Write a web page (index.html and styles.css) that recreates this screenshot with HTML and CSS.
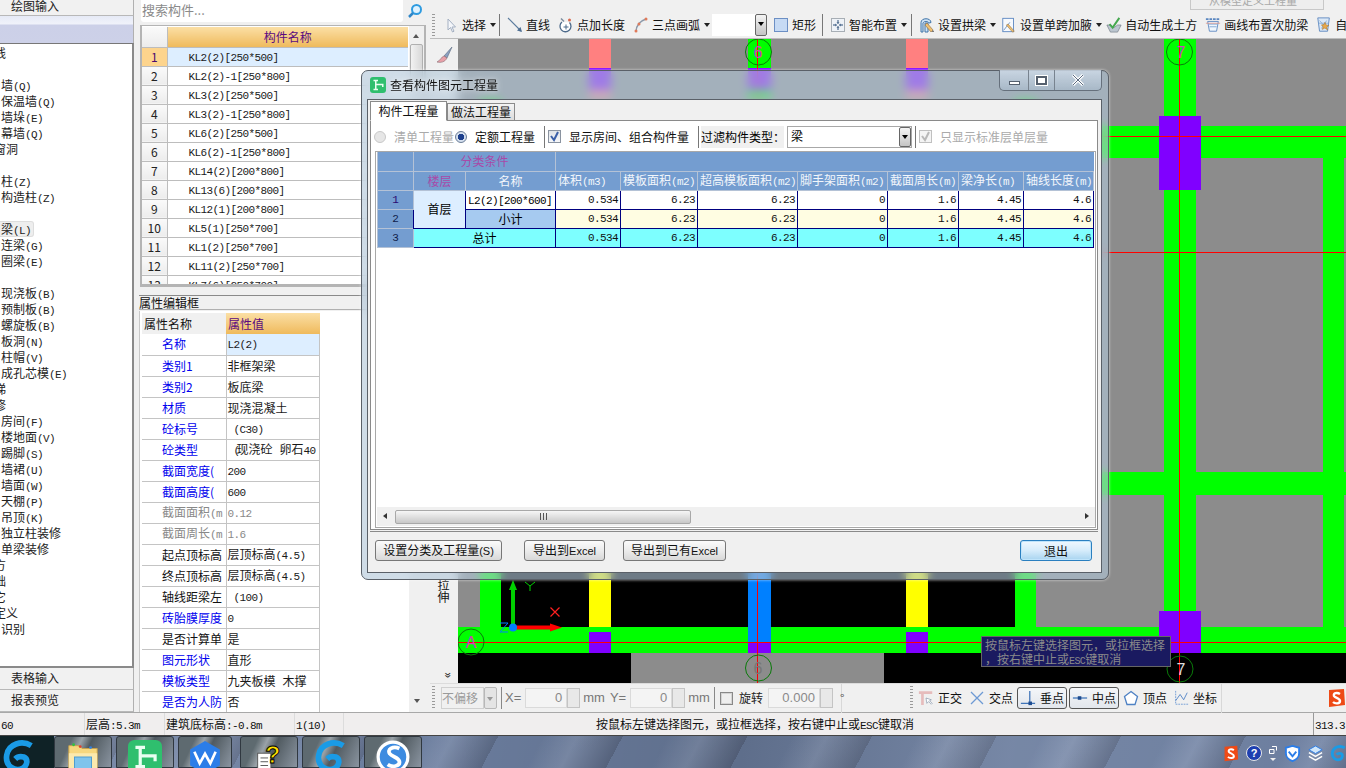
FILE: index.html
```html
<!DOCTYPE html>
<html lang="zh">
<head>
<meta charset="utf-8">
<title>查看构件图元工程量</title>
<link rel="stylesheet" href="styles.css">
</head>
<body>
<svg class="defs" width="0" height="0" aria-hidden="true">
  <symbol id="i-select" viewBox="0 0 16 16"><path d="M5 2v11l2.500-2.500 2 4.500 1.500-.8-2-4.200h3.500z" fill="#f4f6fa" stroke="#a4b0c2"/></symbol>
  <symbol id="i-line" viewBox="0 0 16 16"><path d="M1 1l13 13" stroke="#5c7c9e" stroke-width="1.100"/><path d="M15 15l-5-1.500 3.500-3.500z" fill="#4d6e92"/></symbol>
  <symbol id="i-point" viewBox="0 0 16 16"><path d="M11.500 5.500A5.500 5.500 0 1 1 4 5" fill="#fff" stroke="#4d6a8a" stroke-width="1.300"/><path d="M8 7.500v5M5.500 10h5" stroke="#4d6a8a"/><path d="M3 1.500l3 3" stroke="#7a8a9c" stroke-width="1.400"/><circle cx="11.500" cy="3" r="1.500" fill="#d8684c"/></symbol>
  <symbol id="i-arc" viewBox="0 0 16 16"><path d="M3 15C3 8 7 4 13 2" fill="none" stroke="#8d9aaa" stroke-width="1.500"/><circle cx="3" cy="14" r="1.500" fill="#e07a5a"/><circle cx="6" cy="7" r="1.500" fill="#e07a5a"/><circle cx="13" cy="2" r="1.500" fill="#e07a5a"/></symbol>
  <symbol id="i-rect" viewBox="0 0 16 16"><rect x="1.500" y="1.500" width="13" height="13" fill="#c6daf4" stroke="#6c8fc4"/></symbol>
  <symbol id="i-smart" viewBox="0 0 16 16"><rect x="1.500" y="1.500" width="13" height="13" fill="#eef2f7" stroke="#5f6a76" stroke-dasharray="1 1"/><path d="M8 3v3M8 13v-3M3 8h3M13 8h-3" stroke="#2d4f78"/><path d="M8 7l-1.500-1.500h3zM8 9l-1.500 1.500h3zM7 8L5.500 6.500v3zM9 8l1.500-1.500v3z" fill="#2d4f78"/></symbol>
  <symbol id="i-arch" viewBox="0 0 16 16"><path d="M2 5.500C2 .5 12 .5 12 5.500l-2 .5c-1-2-5-2-6 0v9H2z" fill="#cfe3f6" stroke="#3f74a8"/><path d="M6 6h3v9H6z" fill="#cfe3f6" stroke="#3f74a8"/><path d="M8 6l6 7-2 2-6-7z" fill="#f0c070" stroke="#8a6a40" stroke-width=".6"/><path d="M14 13l1 2-2 0z" fill="#555"/></symbol>
  <symbol id="i-haunch" viewBox="0 0 18 18"><rect x="2" y="1.500" width="12" height="15" fill="#f6f9fd" stroke="#5a86c0"/><path d="M3 15L10 6" stroke="#6a90c0"/><path d="M8 8l7 8-2 1-7-8z" fill="#f0c070" stroke="#8a6a40" stroke-width=".6"/></symbol>
  <symbol id="i-check" viewBox="0 0 18 18"><path d="M1 9h4l4 3 4-3h4l-4 8H5z" fill="#bcc6d0" stroke="#6a7480" stroke-width=".7"/><path d="M4 8l3.500 4L15 1" fill="none" stroke="#45a84f" stroke-width="2.200"/></symbol>
  <symbol id="i-rib" viewBox="0 0 18 18"><path d="M1 2.500h16" stroke="#5a86c0" stroke-width="2" stroke-dasharray="3 1"/><path d="M3 5h12l-2 11H5z" fill="#f0f6fd" stroke="#5a86c0"/><path d="M4 8h10M5 11h8" stroke="#7aa2d2"/><path d="M1 7l16 0" stroke="#e08a7a" stroke-width=".8"/></symbol>
  <symbol id="i-tail" viewBox="0 0 18 18"><path d="M2 1h13l-2 15H4z" fill="#dbe8f6" stroke="#5a86c0"/><path d="M4 4l8 9M12 4l-6 9M3 7h11" stroke="#8aaed8"/><path d="M10 6l1.500 3 3 .5-2.500 2 1 3-3-2-3 1.500 1-3-2-2 3-.5z" fill="#e8a84a" stroke="#a06a20" stroke-width=".5"/></symbol>
  <symbol id="i-brush" viewBox="0 0 20 20"><path d="M18 2l-8 9 3 2z" fill="#8ba0c0" stroke="#5a6a80" stroke-width=".6"/><path d="M10 11c-3 1-3 4-7 6 4 1 8 0 10-4z" fill="#e8a0a8" stroke="#8a6a70" stroke-width=".6"/></symbol>
  <symbol id="i-ortho" viewBox="0 0 18 18"><path d="M1 3h15M5 3v14" stroke="#e6bcbc" stroke-width="3"/><path d="M9 9l1 6 2-2 3 3 1-1-3-3 2-1z" fill="#fff" stroke="#7a8aa0" stroke-width=".7"/></symbol>
  <symbol id="i-cross" viewBox="0 0 16 16"><path d="M2 2l12 12M14 2L2 14" stroke="#6d9ad4" stroke-width="1.300"/></symbol>
  <symbol id="i-perp" viewBox="0 0 18 18"><path d="M1 15h16M11 1v14" stroke="#3f74b8" stroke-width="1.400"/><rect x="9.500" y="13" width="4" height="4" fill="#1e4c90"/></symbol>
  <symbol id="i-mid" viewBox="0 0 18 18"><path d="M1 9h16" stroke="#3f74b8" stroke-width="1.400"/><rect x="6.500" y="7" width="4" height="4" fill="#1e4c90"/></symbol>
  <symbol id="i-apex" viewBox="0 0 16 16"><path d="M8 1.500l6.500 5-2.500 8H4l-2.500-8z" fill="#fff" stroke="#4f82c4" stroke-width="1.300"/></symbol>
  <symbol id="i-coord" viewBox="0 0 18 18"><path d="M3 1v15h14" fill="none" stroke="#6d9ad4" stroke-dasharray="2 1"/><path d="M3 12l5-7 4 6 4-8" fill="none" stroke="#4f82c4"/></symbol>
  <symbol id="i-g" viewBox="0 0 36 36"><path d="M31 6C21 0 7 4 5 16c-2 12 9 18 17 14 5-3 6-10 1-12-4-1-7 0-9 2" fill="none" stroke="#1a9be6" stroke-width="6"/></symbol>
  <symbol id="i-h" viewBox="0 0 32 32"><rect width="32" height="32" rx="6" fill="#2fbf6e"/><path d="M7 7h9M7 25h9M11.500 7v18M11.500 15h14v5" fill="none" stroke="#e9fff2" stroke-width="3"/></symbol>
  <symbol id="i-w" viewBox="0 0 32 32"><path d="M16 1l14 8v15l-14 8-14-8V9z" fill="#2b7de8"/><path d="M6 11l5 11 5-9 5 9 5-11" fill="none" stroke="#fff" stroke-width="2.500"/></symbol>
  <symbol id="i-s" viewBox="0 0 32 32"><circle cx="16" cy="16" r="14" fill="#3d8be0" stroke="#fff" stroke-width="3"/><path d="M22 8c-6-3-12 1-9 5 2 3 8 3 9 7 1 5-7 6-11 3" fill="none" stroke="#fff" stroke-width="3.500"/></symbol>
  <symbol id="i-sogou" viewBox="0 0 20 20"><path d="M3 2l15-1 1 16-16 2z" fill="#ee4a16"/><path d="M14 6c-3-2-7-1-6 2 1 2 6 2 6 5s-5 3-7 1" fill="none" stroke="#fff" stroke-width="2.400"/></symbol>
  <symbol id="i-shield" viewBox="0 0 18 18"><path d="M9 1l7 2v6c0 4-4 7-7 8-3-1-7-4-7-8V3z" fill="#fff" stroke="#2b7de8" stroke-width="2"/><path d="M5 7l4 5 4-5" fill="none" stroke="#2b7de8" stroke-width="2"/></symbol>
  <symbol id="i-cube" viewBox="0 0 18 18"><path d="M9 1l7 4-7 4-7-4z" fill="#cfe6fb" stroke="#2b7de8"/><path d="M2 8l7 4 7-4M2 12l7 4 7-4" fill="none" stroke="#fff" stroke-width="1.500"/></symbol>
</svg>

<div class="app">
  <div class="work">
    <nav class="nav">
      <div class="nav-tab">绘图输入</div>
      <div class="nav-band"></div>
      <ul class="tree">
        <li class="cut">线</li>
        <li></li>
        <li>墙<span class="m">(Q)</span></li>
        <li>保温墙<span class="m">(Q)</span></li>
        <li>墙垛<span class="m">(E)</span></li>
        <li>幕墙<span class="m">(Q)</span></li>
        <li class="cut">窗洞</li>
        <li></li>
        <li>柱<span class="m">(Z)</span></li>
        <li>构造柱<span class="m">(Z)</span></li>
        <li></li>
        <li><span class="sel">梁<span class="m">(L)</span></span></li>
        <li>连梁<span class="m">(G)</span></li>
        <li>圈梁<span class="m">(E)</span></li>
        <li></li>
        <li>现浇板<span class="m">(B)</span></li>
        <li>预制板<span class="m">(B)</span></li>
        <li>螺旋板<span class="m">(B)</span></li>
        <li>板洞<span class="m">(N)</span></li>
        <li>柱帽<span class="m">(V)</span></li>
        <li>成孔芯模<span class="m">(E)</span></li>
        <li class="cut">梯</li>
        <li class="cut">修</li>
        <li>房间<span class="m">(F)</span></li>
        <li>楼地面<span class="m">(V)</span></li>
        <li>踢脚<span class="m">(S)</span></li>
        <li>墙裙<span class="m">(U)</span></li>
        <li>墙面<span class="m">(W)</span></li>
        <li>天棚<span class="m">(P)</span></li>
        <li>吊顶<span class="m">(K)</span></li>
        <li>独立柱装修</li>
        <li>单梁装修</li>
        <li class="cut">方</li>
        <li class="cut">础</li>
        <li class="cut">它</li>
        <li class="cut">定义</li>
        <li>识别</li>
      </ul>
      <div class="nav-tab">表格输入</div>
      <div class="nav-tab">报表预览</div>
    </nav>

    <section class="mid">
      <div class="search">
        <div class="search-box">搜索构件...</div>
        <svg class="search-ico" viewBox="0 0 16 16"><circle cx="9.500" cy="6.500" r="4.500" fill="#dff2ff" stroke="#2e9be0" stroke-width="2"/><path d="M6 10l-4 4" stroke="#2e86c8" stroke-width="2.500"/></svg>
      </div>
      <div class="list">
        <div class="list-clip">
          <table class="ltable">
            <thead><tr><th class="rh"></th><th class="hot">构件名称</th></tr></thead>
            <tbody>
              <tr class="cur"><th class="rh on">1</th><td class="m">KL2(2)[250*500]</td></tr>
              <tr><th class="rh">2</th><td class="m">KL2(2)-1[250*800]</td></tr>
              <tr><th class="rh">3</th><td class="m">KL3(2)[250*500]</td></tr>
              <tr><th class="rh">4</th><td class="m">KL3(2)-1[250*800]</td></tr>
              <tr><th class="rh">5</th><td class="m">KL6(2)[250*500]</td></tr>
              <tr><th class="rh">6</th><td class="m">KL6(2)-1[250*800]</td></tr>
              <tr><th class="rh">7</th><td class="m">KL14(2)[200*800]</td></tr>
              <tr><th class="rh">8</th><td class="m">KL13(6)[200*800]</td></tr>
              <tr><th class="rh">9</th><td class="m">KL12(1)[200*800]</td></tr>
              <tr><th class="rh">10</th><td class="m">KL5(1)[250*700]</td></tr>
              <tr><th class="rh">11</th><td class="m">KL1(2)[250*700]</td></tr>
              <tr><th class="rh">12</th><td class="m">KL11(2)[250*700]</td></tr>
              <tr><th class="rh">13</th><td class="m">KL7(6)[250*700]</td></tr>
            </tbody>
          </table>
        </div>
        <div class="vbar">
          <span class="up"></span>
          <span class="thumb"></span>
        </div>
      </div>
      <div class="split"></div>
      <div class="prop-title">属性编辑框</div>
      <div class="prop">
        <table class="ptable">
          <thead><tr><th class="pn">属性名称</th><th class="hot pv">属性值</th></tr></thead>
          <tbody>
            <tr class="cur"><th class="b">名称</th><td><span class="m">L2(2)</span></td></tr>
            <tr><th class="b">类别1</th><td>非框架梁</td></tr>
            <tr><th class="b">类别2</th><td>板底梁</td></tr>
            <tr><th class="b">材质</th><td>现浇混凝土</td></tr>
            <tr><th class="b">砼标号</th><td><span class="m">&nbsp;(C30)</span></td></tr>
            <tr><th class="b">砼类型</th><td><span class="m ov">&nbsp;(</span>现浇砼<span class="ws">卵石</span><span class="m">40</span></td></tr>
            <tr><th class="b">截面宽度(</th><td><span class="m">200</span></td></tr>
            <tr><th class="b">截面高度(</th><td><span class="m">600</span></td></tr>
            <tr class="dim"><th>截面面积<span class="m">(m</span></th><td><span class="m">0.12</span></td></tr>
            <tr class="dim"><th>截面周长<span class="m">(m</span></th><td><span class="m">1.6</span></td></tr>
            <tr><th>起点顶标高</th><td>层顶标高<span class="m">(4.5)</span></td></tr>
            <tr><th>终点顶标高</th><td>层顶标高<span class="m">(4.5)</span></td></tr>
            <tr><th>轴线距梁左</th><td><span class="m">&nbsp;(100)</span></td></tr>
            <tr><th class="b">砖胎膜厚度</th><td><span class="m">0</span></td></tr>
            <tr><th>是否计算单</th><td>是</td></tr>
            <tr><th class="b">图元形状</th><td>直形</td></tr>
            <tr><th class="b">模板类型</th><td>九夹板模<span class="ws">木撑</span></td></tr>
            <tr><th class="b">是否为人防</th><td>否</td></tr>
          </tbody>
        </table>
        <div class="pbar"><span class="dn"></span></div>
      </div>
    </section>

    <main class="cad">
      <div class="cad-top">
        <div class="strip"><span class="ghost-btn">从模型定义工程量</span></div>
        <div class="toolbar">
          <span class="grip"></span>
          <span class="tool first"><svg class="ic"><use href="#i-select"/></svg>选择<i class="caret"></i></span>
          <span class="vsep"></span>
          <span class="tool"><svg class="ic"><use href="#i-line"/></svg>直线</span>
          <span class="tool"><svg class="ic"><use href="#i-point"/></svg>点加长度</span>
          <span class="tool"><svg class="ic"><use href="#i-arc"/></svg>三点画弧<i class="caret"></i></span>
          <span class="combo"><i class="combo-arrow"></i></span>
          <span class="tool mid6"><svg class="ic"><use href="#i-rect"/></svg>矩形</span>
          <span class="vsep wide"></span>
          <span class="tool tight"><svg class="ic"><use href="#i-smart"/></svg>智能布置<i class="caret"></i></span>
          <span class="vsep s"></span>
          <span class="tool tight"><svg class="ic"><use href="#i-arch"/></svg>设置拱梁<i class="caret"></i></span>
          <span class="tool tight"><svg class="ic"><use href="#i-haunch"/></svg>设置单跨加腋<i class="caret"></i></span>
          <span class="tool snug"><svg class="ic"><use href="#i-check"/></svg>自动生成土方</span>
          <span class="tool"><svg class="ic"><use href="#i-rib"/></svg>画线布置次肋梁</span>
          <span class="tool"><svg class="ic"><use href="#i-tail"/></svg>自动</span>
        </div>
      </div>

      <div class="cad-mid">
        <aside class="side">
          <svg class="brush"><use href="#i-brush"/></svg>
          <div class="side-word">拉<br>伸</div>
          <div class="chev">»</div>
        </aside>
        <svg class="canvas" viewBox="458 39 888 644" aria-label="梁布置图">
          <rect x="458" y="39" width="888" height="644" fill="#8c8c8c"/>
          <rect x="501" y="540" width="514" height="87" fill="#000"/>
          <rect x="458" y="653" width="173" height="30" fill="#000"/>
          <rect x="884" y="653" width="462" height="30" fill="#000"/>
          <g fill="#00ff00">
            <rect x="480" y="100" width="21" height="527"/>
            <rect x="748" y="39" width="23" height="60"/>
            <rect x="1015" y="100" width="21" height="527"/>
            <rect x="1164" y="39" width="32" height="600"/>
            <rect x="1323" y="126" width="21" height="510"/>
            <rect x="458" y="126" width="888" height="32"/>
            <rect x="458" y="472" width="888" height="23"/>
            <rect x="458" y="627" width="888" height="26"/>
          </g>
          <rect x="589" y="39" width="22" height="60" fill="#ff8080"/>
          <rect x="906" y="39" width="22" height="60" fill="#ff8080"/>
          <rect x="589" y="530" width="22" height="97" fill="#ffff00"/>
          <rect x="906" y="530" width="22" height="97" fill="#ffff00"/>
          <rect x="748" y="530" width="23" height="113" fill="#0080ff"/>
          <g fill="#8000ff">
            <rect x="589" y="68" width="22" height="22"/>
            <rect x="748" y="68" width="23" height="22"/>
            <rect x="906" y="68" width="22" height="22"/>
            <rect x="1159" y="116" width="42" height="74"/>
            <rect x="589" y="632" width="22" height="21"/>
            <rect x="748" y="643" width="23" height="10"/>
            <rect x="906" y="632" width="22" height="21"/>
            <rect x="1159" y="611" width="42" height="42"/>
          </g>
          <g stroke="#ff0000" stroke-width="1" shape-rendering="crispEdges">
            <path d="M458 136.500H1346M458 252.500H1346M458 642.500H1346"/>
            <path d="M757.500 39V683M1179.500 39V683"/>
          </g>
          <g fill="none" stroke="#0a7a0a">
            <circle cx="758.500" cy="52" r="13"/>
            <circle cx="1179.500" cy="52" r="13"/>
            <circle cx="471" cy="642" r="13"/>
            <circle cx="758.500" cy="668" r="13"/>
            <circle cx="1180" cy="669" r="13"/>
          </g>
          <g class="axis-label">
            <text x="758" y="58" text-anchor="middle">6</text>
            <text x="1181" y="58" text-anchor="middle">7</text>
            <text x="471" y="648" text-anchor="middle">A</text>
            <text x="758" y="674" text-anchor="middle" class="fade">6</text>
            <text x="1181" y="675" text-anchor="middle" class="white">7</text>
          </g>
          <path d="M513 627V587" stroke="#00d000" stroke-width="4"/>
          <path d="M513 580l-4 10h8z" fill="#00d000"/>
          <path d="M513 627.500H552" stroke="#ff0000" stroke-width="4"/>
          <path d="M562 627.500l-12-4v8z" fill="#ff0000"/>
          <circle cx="513" cy="627.500" r="4" fill="#0080ff"/>
          <path d="M525 582l5 4 5-4M530 586v5" fill="none" stroke="#00d000"/>
          <path d="M550.500 607.500l9 9M559.500 607.500l-9 9" fill="none" stroke="#ff2020" stroke-width="1.200"/>
          <path d="M500 623h8l-8 9h8" fill="none" stroke="#0080ff"/>
        </svg>
      </div>

      <div class="snapbar">
        <div class="snap-left">
          <span class="grip tall"></span>
          <span class="off">不偏移</span>
          <span class="off-arrow"></span>
          <span class="vsep h"></span>
          <span class="lab dim">X=</span>
          <span class="num w42"><b>0</b></span><span class="spin"></span>
          <span class="lab dim u">mm</span>
          <span class="lab dim">Y=</span>
          <span class="num w42"><b>0</b></span><span class="spin"></span>
          <span class="lab dim u">mm</span>
          <span class="vsep h"></span>
          <span class="chk"></span>
          <span class="lab rot">旋转</span>
          <span class="num w52"><b>0.000</b></span><span class="spin"></span>
          <span class="lab deg">°</span>
        </div>
        <div class="snap-right">
          <span class="grip tall"></span>
          <span class="tool s"><svg class="ic"><use href="#i-ortho"/></svg>正交</span>
          <span class="tool s"><svg class="ic"><use href="#i-cross"/></svg>交点</span>
          <span class="tool s on"><svg class="ic"><use href="#i-perp"/></svg>垂点</span>
          <span class="tool s on"><svg class="ic"><use href="#i-mid"/></svg>中点</span>
          <span class="tool s"><svg class="ic"><use href="#i-apex"/></svg>顶点</span>
          <span class="tool s"><svg class="ic"><use href="#i-coord"/></svg>坐标</span>
        </div>
        <svg class="sogou"><use href="#i-sogou"/></svg>
      </div>
    </main>
  </div>

  <footer class="status">
    <span class="c w85"><span class="m">60</span></span>
    <span class="c w79">层高<span class="m">:5.3m</span></span>
    <span class="c w131">建筑底标高<span class="m">:-0.8m</span></span>
    <span class="c w49"><span class="m">1(10)</span></span>
    <span class="c msg">按鼠标左键选择图元，或拉框选择，按右键中止或<span class="m">ESC</span>键取消</span>
    <span class="c coord"><span class="m">313.3</span></span>
  </footer>

  <div class="taskbar">
    <span class="start"><svg class="tb-ic"><use href="#i-g"/></svg></span>
    <span class="tb w58"><svg class="tb-ic" viewBox="0 0 36 36"><path d="M3 6h11l3 3h16v27H3z" fill="#f6d77e" stroke="#c9a24a"/><path d="M3 14h30v22H3z" fill="#fbe9ad"/><rect x="9" y="18" width="18" height="18" fill="#7fc4ec" stroke="#4a9ad0"/><circle cx="8" cy="5" r="1.500" fill="#30c040"/><circle cx="15" cy="7" r="1.500" fill="#e04030"/><circle cx="26" cy="8" r="1.500" fill="#3080e0"/></svg></span>
    <span class="tb w58"><svg class="tb-ic"><use href="#i-h"/></svg></span>
    <span class="tb w53"><svg class="tb-ic"><use href="#i-w"/></svg></span>
    <span class="tb w58 gap8"><svg class="tb-ic" viewBox="0 0 36 36"><rect x="6" y="14" width="14" height="22" fill="#fff" stroke="#555"/><path d="M9 19h8M9 23h8M9 27h8M9 31h8" stroke="#555"/><text x="14" y="24" class="qm">?</text></svg></span>
    <span class="tb w58"><svg class="tb-ic"><use href="#i-g"/></svg></span>
    <span class="tb w58"><svg class="tb-ic"><use href="#i-s"/></svg></span>
    <span class="tray">
      <svg class="tr-ic"><use href="#i-sogou"/></svg>
      <span class="help">?</span>
      <span class="flag"><svg viewBox="0 0 8 8" width="8" height="8"><path d="M.5 3.500h4.500v4H.5zM3 .5h4.500v4" fill="none" stroke="#fff"/></svg><i></i></span>
      <svg class="tr-ic"><use href="#i-shield"/></svg>
      <svg class="tr-ic"><use href="#i-cube"/></svg>
      <svg class="tr-ic"><use href="#i-g"/></svg>
    </span>
  </div>

  <!-- floating tooltip over the drawing -->
  <div class="tip">按鼠标左键选择图元，或拉框选择<br>，按右键中止或<span class="m">ESC</span>键取消</div>

  <!-- floating dialog window -->
  <div class="dlg">
    <header class="dlg-title">
      <svg class="dlg-ic"><use href="#i-h"/></svg>
      <span class="dlg-name">查看构件图元工程量</span>
      <div class="winbtns">
        <span class="wb min"><i></i></span>
        <span class="wb max"><i></i></span>
        <span class="wb close">
          <svg width="14" height="12" viewBox="0 0 14 12"><path d="M2 1l10 10M12 1L2 11" stroke="#fff" stroke-width="3"/><path d="M2 1l10 10M12 1L2 11" stroke="#5a6a80" stroke-width="1"/></svg>
        </span>
      </div>
    </header>
    <div class="dlg-body">
      <div class="tabs">
        <span class="tab act">构件工程量</span>
        <span class="tab">做法工程量</span>
      </div>
      <div class="tabpanel">
        <div class="opts">
          <span class="radio off-r"></span>
          <span class="o-lab gray w60">清单工程量</span>
          <span class="radio on-r"></span>
          <span class="o-lab w60">定额工程量</span>
          <span class="osep"></span>
          <span class="ck"><svg width="11" height="11" viewBox="0 0 11 11"><path d="M2 5l3 4 4-8" fill="none" stroke="#3a5fa8" stroke-width="2"/></svg></span>
          <span class="o-lab">显示房间、组合构件量</span>
          <span class="osep"></span>
          <span class="filter">过滤构件类型：</span>
          <span class="fcombo">梁<i class="combo-arrow"></i></span>
          <span class="osep"></span>
          <span class="ck dis"><svg width="11" height="11" viewBox="0 0 11 11"><path d="M2 5l3 4 4-8" fill="none" stroke="#b8b8b8" stroke-width="2"/></svg></span>
          <span class="o-lab gray">只显示标准层单层量</span>
        </div>
        <div class="gridbox">
          <div class="gridarea">
            <table class="qty">
              <colgroup>
                <col class="c36"><col class="c52"><col class="c90"><col class="c65"><col class="c77"><col class="c100"><col class="c90"><col class="c71"><col class="c65"><col class="c70">
              </colgroup>
              <thead>
                <tr>
                  <th></th>
                  <th colspan="2" class="pk">分类条件</th>
                  <th colspan="7" class="noline"></th>
                </tr>
                <tr>
                  <th></th>
                  <th class="pk">楼层</th>
                  <th>名称</th>
                  <th class="lf">体积<span class="m">(m3)</span></th>
                  <th class="lf">模板面积<span class="m">(m2)</span></th>
                  <th class="lf">超高模板面积<span class="m">(m2)</span></th>
                  <th class="lf">脚手架面积<span class="m">(m2)</span></th>
                  <th class="lf">截面周长<span class="m">(m)</span></th>
                  <th class="lf">梁净长<span class="m">(m)</span></th>
                  <th class="lf">轴线长度<span class="m">(m)</span></th>
                </tr>
              </thead>
              <tbody>
                <tr>
                  <th class="sn pu">1</th>
                  <td rowspan="2" class="floor">首层</td>
                  <td class="nm"><span class="m">L2(2)[200*600]</span></td>
                  <td class="v">0.534</td><td class="v">6.23</td><td class="v">6.23</td><td class="v">0</td><td class="v">1.6</td><td class="v">4.45</td><td class="v">4.6</td>
                </tr>
                <tr class="sub">
                  <th class="sn">2</th>
                  <td class="subn">小计</td>
                  <td class="v">0.534</td><td class="v">6.23</td><td class="v">6.23</td><td class="v">0</td><td class="v">1.6</td><td class="v">4.45</td><td class="v">4.6</td>
                </tr>
                <tr class="tot">
                  <th class="sn">3</th>
                  <td colspan="2" class="totn">总计</td>
                  <td class="v">0.534</td><td class="v">6.23</td><td class="v">6.23</td><td class="v">0</td><td class="v">1.6</td><td class="v">4.45</td><td class="v">4.6</td>
                </tr>
              </tbody>
            </table>
          </div>
          <div class="hbar">
            <span class="harr l"></span>
            <span class="hthumb"><i></i></span>
            <span class="harr r"></span>
          </div>
        </div>
      </div>
      <div class="dlg-foot">
        <button class="btn w127">设置分类及工程量<span class="ln">(S)</span></button>
        <button class="btn w81 ml22">导出到<span class="ln">Excel</span></button>
        <button class="btn w103 ml18">导出到已有<span class="ln">Excel</span></button>
        <button class="btn w72 primary">退出</button>
      </div>
    </div>
  </div>
</div>
</body>
</html>
```

FILE: styles.css
```css
* { box-sizing: border-box; }
html, body { margin: 0; padding: 0; height: 768px; overflow: hidden; }
body { font: 12px/16px "Noto Sans CJK SC", "Noto Sans", sans-serif; color: #000; background: #f0f0f0; }
.defs { position: absolute; }
ul { list-style: none; margin: 0; padding: 0; }
i { font-style: normal; }

.m { font-family: "Liberation Mono", "Noto Sans CJK SC", monospace; font-size: 11px; letter-spacing: -0.6px; }

.app { position: relative; width: 1346px; height: 768px; display: flex; flex-direction: column; }
.work { display: flex; height: 713px; flex: none; border-bottom: 1px solid #a8a8a8; }

/* left navigator */
.nav { width: 134px; flex: none; display: flex; flex-direction: column; }
.nav-tab { height: 22px; flex: none; padding: 2px 0 0 11px; background: #f1f1f1; border-right: 1px solid #b0b0b0; border-bottom: 1px solid #b8b8b8; font-size: 12px; color: #222; }
.nav > .nav-tab:first-child { height: 16px; margin-top: 0; padding-top: 0; line-height: 11px; }
.nav-band { height: 27px; flex: none; background: linear-gradient(#e6eaf6 0, #f0f2fa 8px, #ccd0e8 9px, #cdd1e8 100%); border-right: 1px solid #b0b0b0; }
.tree { flex: 1; min-height: 0; overflow: hidden; background: #fff; border-top: 1px solid #777; border-right: 2px solid #8a8a8a; border-bottom: 2px solid #8a8a8a; padding-top: 1px; }
.tree li { height: 16px; line-height: 16px; padding-left: 1px; white-space: nowrap; color: #222; }
.tree li.cut { margin-left: -7px; }
.sel { display: inline-block; height: 16px; padding-right: 2px; margin-left: -1px; padding-left: 1px; background: #eee; border: 1px solid #ddd; border-left: 0; border-radius: 0 3px 3px 0; line-height: 14px; }

/* middle panel */
.mid { width: 296px; flex: none; padding-left: 5px; background: #f0f0f0; display: flex; flex-direction: column; }
.search { height: 25px; flex: none; display: flex; padding-left: 2px; }
.search-box { width: 262px; height: 22px; background: #fff; border-radius: 0 0 3px 3px; color: #8a8a8a; font-size: 13px; line-height: 19px; padding-left: 1px; }
.search-ico { width: 16px; height: 16px; margin: 3px 0 0 4px; }
.list { width: 286px; height: 262px; flex: none; margin-left: 1px; border: 2px solid #b4b4b4; border-bottom-width: 3px; border-top-width: 1px; display: flex; background: #f0f0f0; overflow: hidden; }
.list-clip { width: 267px; flex: none; overflow: hidden; padding: 1px 0 0 0; background: #fff; }
.ltable { width: 266px; table-layout: fixed; border-collapse: collapse; }
.ltable th, .ltable td { height: 19px; padding: 0; border: 0; border-bottom: 1px solid #bdbdbd; font-weight: normal; white-space: nowrap; }
.ltable thead th { height: 20px; }
.ltable .rh { width: 25px; border-right: 1px solid #bdbdbd; background: linear-gradient(#fafafa, #ececec); text-align: center; color: #222; }
.ltable td { padding-left: 21px; padding-top: 2px; color: #1a1a1a; }
.hot { background: linear-gradient(#fbdfa5, #efba5c); color: #5a0a80; font-weight: normal; }
.cur td { background: #ddeeff; }
.ltable .rh.on { background: #fdd48d; color: #4a0a70; }
.vbar { width: 15px; flex: none; display: flex; flex-direction: column; padding-top: 1px; }
.up { height: 17px; position: relative; }
.up::after { content: ""; position: absolute; left: 4px; top: 7px; border: 3px solid transparent; border-bottom: 4px solid #555; border-top: 0; }
.thumb { height: 45px; margin: 0 1px; background: linear-gradient(90deg, #f2f2f2, #d8d8d8); border: 1px solid #b0b0b0; border-radius: 2px; }
.split { height: 8px; flex: none; }
.prop-title { height: 15px; flex: none; width: 291px; border-top: 1px solid #8a8a8a; border-bottom: 1px solid #b0b0b0; line-height: 13px; color: #111; }
.prop { width: 287px; height: 401px; flex: none; margin-top: 1px; background: #fff; padding: 2px 0 0 2px; display: flex; justify-content: space-between; border-left: 1px solid #c8c8c8; overflow: hidden; }
.ptable { width: 178px; table-layout: fixed; border-collapse: collapse; }
.ptable th, .ptable td { height: 21px; padding: 0; font-weight: normal; text-align: left; white-space: nowrap; overflow: hidden; border-bottom: 1px solid #c4c4c4; }
.ptable thead th { height: 21px; border-bottom: 0; }
.pn { width: 84px; padding-left: 2px !important; background: #f0f0f0; color: #111; }
.pv { padding-left: 2px !important; }
.ptable tbody th { padding-left: 20px; color: #111; border-right: 1px solid #c4c4c4; }
.ptable tbody th.b { color: #0000ee; }
.ptable td { padding-left: 1px; color: #1a1a1a; border-right: 1px solid #c4c4c4; }
.ptable .dim th, .ptable .dim td { color: #888; }
.ov { margin-right: -3px; }
.ws { margin-left: 7px; }
.pbar { width: 17px; flex: none; background: #f0f0f0; position: relative; height: 399px; }
.dn { position: absolute; left: 5px; bottom: 9px; border: 3px solid transparent; border-top: 4px solid #555; border-bottom: 0; }

/* main drawing column */
.cad { width: 916px; flex: none; display: flex; flex-direction: column; }
.cad-top { height: 39px; flex: none; border-bottom: 1px solid #bcbcbc; background: #f0f0f0; }
.strip { height: 12px; display: flex; justify-content: flex-end; padding-right: 22px; overflow: hidden; }
.ghost-btn { width: 134px; height: 10px; background: #eee; border: 1px solid #c8c8c8; border-top: 0; color: #aaa; line-height: 1px; padding-left: 18px; font-size: 11px; white-space: nowrap; overflow: hidden; }
.toolbar { height: 26px; display: flex; align-items: center; white-space: nowrap; overflow: hidden; }
.grip { width: 3px; height: 22px; margin: 0 8px 0 2px; flex: none; background: repeating-linear-gradient(#9a9a9a 0 1px, transparent 1px 3px); }
.grip.tall { height: 24px; }
.tool { display: inline-flex; align-items: center; gap: 3px; margin-left: 8px; flex: none; color: #111; }
.tool.first { margin-left: 0; }
.tool.tight { margin-left: 5px; }
.tool.snug { margin-left: 4px; }
.tool.mid6 { margin-left: 6px; }
.ic { width: 16px; height: 16px; flex: none; }
.caret { width: 0; height: 0; margin-left: 1px; border: 3.5px solid transparent; border-top: 4px solid #222; border-bottom: 0; }
.vsep { width: 1px; height: 22px; margin: 0 0 0 3px; background: #777; flex: none; }
.vsep.wide { margin-left: 6px; }
.vsep + .tool { margin-left: 7px; }
.vsep.s { margin-left: 4px; }
.combo { width: 55px; height: 22px; margin-left: 2px; background: #fff; position: relative; flex: none; }
.combo-arrow { position: absolute; right: 0; top: 0; bottom: 0; width: 12px; background: linear-gradient(#f4f4f4, #c4c4c4); border: 1px solid #666; border-radius: 2px; }
.combo-arrow::after { content: ""; position: absolute; left: 2px; top: 7px; border: 3px solid transparent; border-top: 4px solid #000; border-bottom: 0; }

.cad-mid { flex: 1; display: flex; min-height: 0; }
.side { width: 28px; flex: none; background: #f0f0f0; display: flex; flex-direction: column; align-items: center; padding: 6px 0 0; }
.brush { width: 20px; height: 20px; flex: none; }
.side-word { margin-top: auto; line-height: 12px; color: #111; margin-right: 1px; }
.chev { height: 14px; margin: 65px 0 1px 9px; font-size: 13px; line-height: 11px; transform: rotate(90deg); color: #111; }
.canvas { width: 888px; height: 644px; flex: none; display: block; }
.axis-label text { font: 16px "Liberation Sans", sans-serif; fill: #d040c0; }
.axis-label .white { fill: #dddddd; }
.axis-label .fade { fill: #777; }

.snapbar { height: 29px; flex: none; display: flex; align-items: center; background: #f0f0f0; border-top: 1px solid #dcdcdc; position: relative; }
.snap-left { width: 412px; height: 29px; flex: none; display: flex; align-items: center; border-right: 1px solid #d8d8d8; color: #111; }
.snap-left .grip { margin-right: 6px; }
.off { width: 43px; height: 22px; flex: none; color: #9a9a9a; border: 1px solid #d0d0d0; font-size: 12px; line-height: 20px; white-space: nowrap; text-align: left; }
.off-arrow { width: 13px; height: 22px; flex: none; background: #e4e4e4; border: 1px solid #b8b8b8; position: relative; border-radius: 2px; }
.off-arrow::after { content: ""; position: absolute; left: 2px; top: 9px; border: 3px solid transparent; border-top: 4px solid #999; border-bottom: 0; }
.snap-left .vsep { margin: 0 3px 0 4px; height: 22px; background: #888; }
.lab { flex: none; }
.lab.dim { color: #777; font-family: "Liberation Sans", sans-serif; font-size: 13px; }
.lab.u { margin: 0 5px 0 3px; }
.snap-left .u + .vsep { margin-left: -1px; }
.rot { margin: 0 1px 0 6px; color: #222; }
.deg { margin-left: 7px; color: #555; }
.num { height: 20px; text-align: right; background: #f4f4f4; border: 1px solid #dadada; font-family: "Liberation Sans", sans-serif; font-size: 13px; line-height: 18px; padding-right: 4px; color: #8a8a8a; margin-left: 4px; flex: none; }
.num b { font-weight: normal; }
.w42 { width: 42px; }
.w52 { width: 52px; }
.spin { width: 13px; height: 20px; flex: none; background: linear-gradient(#e8e8e8 50%, #aaa 50%, #aaa 52%, #e8e8e8 52%); border: 1px solid #c4c4c4; }
.chk { width: 13px; height: 13px; margin-left: 2px; background: #eee; border: 1px solid #888; box-shadow: inset 0 0 0 1px #d4d4d4; flex: none; }
.snap-right { width: 312px; height: 29px; flex: none; margin-left: 68px; display: flex; align-items: center; border-right: 1px solid #d8d8d8; white-space: nowrap; }
.snap-right .grip { margin: 0 1px 0 0; }
.snap-right .tool { margin-left: 7px; gap: 4px; }
.snap-right .grip + .tool { margin-left: 4px; }
.snap-right .tool.on { height: 22px; margin-left: 4px; padding: 0 2px; background: linear-gradient(#f4f6f9, #e2e6ec); border: 1px solid #555; border-radius: 3px; }
.snap-right .tool.on + .tool.on { margin-left: 2px; }
.snap-right .tool.on + .tool:not(.on) { margin-left: 4px; }
.snap-right .tool:last-child { margin-left: 6px; }
.sogou { width: 20px; height: 22px; position: absolute; right: 0; top: 3px; }

/* status bar */
.status { height: 23px; flex: none; display: flex; background: #f0eeee; border-bottom: 1px solid #444; }
.status .c { padding-left: 1px; line-height: 22px; border-right: 1px solid #dcdcdc; flex: none; white-space: nowrap; color: #111; }
.status .m { font-size: 11px; }
.w85 { width: 85px; }
.w79 { width: 80px; }
.w131 { width: 130px; }
.w49 { width: 49px; }
.status .msg { width: 970px; padding-left: 252px; border-right: 1px solid #999; }
.status .coord { flex: 1; border: 0; padding-left: 1px; }

/* taskbar */
.taskbar { height: 32px; flex: none; display: flex; overflow: hidden; background: linear-gradient(100deg, rgba(255,255,255,.1) 0 10%, transparent 30%, rgba(0,0,0,.12) 55%, rgba(255,255,255,.08) 75%, transparent 100%), repeating-linear-gradient(118deg, #6b7d9e 0 40px, #7e8eac 70px, #5c6a86 110px); }
.start { width: 54px; height: 32px; flex: none; background: #0f2226; display: flex; justify-content: flex-start; padding: 3px 0 0 2px; }
.tb { height: 32px; flex: none; margin-left: 1px; display: flex; justify-content: center; padding-top: 2px; background: linear-gradient(115deg, #5e6a70 0 25%, #9aa2a8 40%, #505a60 55%, #8a94a0 100%); border: 1px solid #303840; border-radius: 3px 3px 0 0; margin-right: 3px; }
.start + .tb { margin-left: 0; }
.w58 { width: 58px; }
.w53 { width: 54px; margin-right: 8px; }
.gap8 { margin-left: 0; }
.tb-ic { width: 34px; height: 36px; flex: none; }
.qm { font: bold 26px "Liberation Sans", sans-serif; fill: #ffe000; stroke: #000; stroke-width: 1; }
.tray { margin-left: auto; display: flex; align-items: center; gap: 6px; padding: 2px 0 0; width: 124px; flex: none; overflow: hidden; }
.tr-ic { width: 17px; height: 17px; flex: none; }
.help { width: 16px; height: 16px; border-radius: 50%; background: #1e3fb0; border: 1px solid #e8e8e8; color: #fff; text-align: center; font: bold 11px/14px "Liberation Sans", sans-serif; flex: none; margin-left: 1px; }
.flag { width: 10px; flex: none; display: flex; flex-direction: column; align-items: center; gap: 4px; }
.flag i { border: 3px solid transparent; border-top: 3px solid #eee; border-bottom: 0; }

/* tooltip */
.tip { position: absolute; left: 981px; top: 636px; width: 190px; height: 31px; padding: 1px 3px; background: #1a1a60; border: 1px solid #666; color: #8a8a8a; line-height: 14px; white-space: nowrap; }
.tip .m { font-size: 10px; }

/* dialog */
.dlg { position: absolute; left: 361px; top: 70px; width: 748px; height: 510px; padding: 0 6px 6px 5px; border: 1px solid #5a6068; border-radius: 7px; background: rgba(178,198,216,.62); -webkit-backdrop-filter: blur(5px); backdrop-filter: blur(5px); box-shadow: 0 0 3px rgba(255,255,255,.7); display: flex; flex-direction: column; }
.dlg-title { height: 28px; flex: none; display: flex; align-items: center; position: relative; padding-left: 3px; }
.dlg-ic { width: 16px; height: 16px; }
.dlg-name { margin-left: 4px; color: #111; font-size: 12px; text-shadow: 0 0 6px #fff; }
.winbtns { position: absolute; right: 0; top: -1px; display: flex; height: 21px; border: 1px solid #66707c; border-top: 0; border-radius: 0 0 5px 5px; background: linear-gradient(rgba(210,222,235,.8), rgba(170,188,205,.7)); }
.wb { height: 20px; display: flex; align-items: center; justify-content: center; border-right: 1px solid #78838f; }
.wb.min { width: 29px; }
.wb.max { width: 26px; }
.wb.close { width: 46px; border: 0; }
.wb.min i { width: 11px; height: 4px; margin-top: 6px; background: #fff; border: 1px solid #55606e; }
.wb.max i { width: 11px; height: 9px; background: #fff; border: 2px solid #55606e; box-shadow: 0 0 0 1px #fff; }
.dlg-body { flex: 1; background: #f0f0f0; border: 1px solid #5a6068; padding: 1px 3px 0 2px; display: flex; flex-direction: column; min-height: 0; }
.tabs { height: 20px; flex: none; display: flex; align-items: flex-end; margin-bottom: -1px; position: relative; z-index: 1; }
.tab { width: 68px; height: 18px; background: linear-gradient(#f4f4f4, #dcdcdc); border: 1px solid #8a8a8a; border-bottom: 1px solid #8a8a8a; text-align: center; line-height: 16px; color: #111; }
.tab.act { width: 77px; height: 20px; background: #fff; border-bottom: 1px solid #fff; line-height: 18px; }
.tabpanel { height: 410px; width: 728px; flex: none; background: #fff; border: 1px solid #8a8a8a; padding: 0 1px 0 4px; display: flex; flex-direction: column; }
.opts { height: 30px; flex: none; display: flex; align-items: center; padding-top: 1px; white-space: nowrap; }
.radio { width: 12px; height: 12px; border-radius: 50%; flex: none; }
.off-r { background: #e6e6e6; border: 1px solid #c8c8c8; }
.on-r { background: radial-gradient(circle, #1c3f8c 0 3px, #d4dfee 3.500px); border: 1px solid #6a7c96; margin-left: 1px; }
.o-lab { margin-left: 8px; color: #111; }
.o-lab.gray { color: #aaa; }
.w60 { width: 60px; margin-right: 0; }
.radio.off-r { margin-left: -1px; }
.ck { width: 13px; height: 13px; display: flex; align-items: center; justify-content: center; background: linear-gradient(#dfe3e8, #f6f7f9); border: 1px solid #8a93a0; margin-left: 3px; flex: none; }
.ck.dis { background: #f4f4f4; border-color: #c0c0c0; }
.osep { width: 1px; height: 22px; margin-left: 9px; background: #777; flex: none; }
.opts .osep + .filter { margin-left: 2px; }
.filter { width: 83px; height: 22px; line-height: 22px; background: #f0f0f0; flex: none; overflow: hidden; }
.fcombo { width: 125px; height: 22px; margin-left: 3px; position: relative; background: #fff; border: 1px solid #a8a8a8; line-height: 18px; padding-left: 3px; flex: none; }
.fcombo + .osep { margin-left: 3px; }
.gridbox { height: 377px; width: 721px; flex: none; border: 1px solid #a8a8a8; display: flex; flex-direction: column; padding: 0 0 0 1px; }
.gridarea { flex: 1; min-height: 0; }
.qty { width: 716px; table-layout: fixed; border-collapse: collapse; }
.c36 { width: 36px; } .c52 { width: 52px; } .c90 { width: 90px; } .c65 { width: 65px; } .c77 { width: 77px; } .c100 { width: 100px; } .c71 { width: 71px; } .c70 { width: 70px; }
.qty th, .qty td { height: 19px; padding: 0; font-weight: normal; white-space: nowrap; overflow: hidden; }
.qty thead th { background: #749dd0; color: #f2f6fb; border: 1px solid #b4c2d6; border-top: 0; text-align: center; }
.qty thead th.lf { text-align: left; padding-left: 2px; }
.qty thead th.pk { color: #a84aa8; }
.qty thead th.noline { border-right: 0; }
.qty .sn { background: #749dd0; color: #10204a; border: 1px solid #b4c2d6; border-top: 0; text-align: center; font: 11px/18px "Liberation Mono", monospace; }
.qty .sn.pu { color: #2a0a70; }
.qty td { border: 1px solid #000080; background: #fff; }
.qty .v { text-align: right; padding-right: 2px; font: 11px/18px "Liberation Mono", monospace; letter-spacing: -0.6px; color: #111; }
.qty .floor { background: #ddeeff; text-align: center; }
.qty .nm { padding-left: 2px; }
.sub .v { background: #fffde2; }
.qty .subn { background: #a6caf0; text-align: center; }
.tot td, .tot .v { background: #7dffff; }
.qty .totn { text-align: center; }
.hbar { height: 19px; flex: none; margin: 0 0 1px 0; background: #f0f0f0; display: flex; align-items: center; padding: 0 2px 0 0; }
.harr { width: 16px; height: 17px; position: relative; flex: none; }
.harr.l::after { content: ""; position: absolute; left: 6px; top: 5px; border: 3px solid transparent; border-right: 4px solid #333; border-left: 0; }
.harr.r { margin-left: auto; }
.harr.r::after { content: ""; position: absolute; right: 4px; top: 5px; border: 3px solid transparent; border-left: 4px solid #333; border-right: 0; }
.hthumb { width: 296px; height: 14px; margin-left: 2px; display: flex; align-items: center; justify-content: center; background: linear-gradient(#f6f6f6, #c8c8c8); border: 1px solid #a8a8a8; border-radius: 2px; }
.hthumb i { width: 7px; height: 7px; background: repeating-linear-gradient(90deg, #555 0 1px, transparent 1px 3px); }
.dlg-foot { flex: 1; display: flex; align-items: flex-start; padding: 8px 0 0 5px; border-top: 1px solid #8a8a8a; margin-top: 1px; }
.btn { height: 21px; padding: 0; font: 12px/18px "Noto Sans CJK SC", sans-serif; color: #111; background: linear-gradient(#fbfbfb, #ececec 50%, #d8d8d8); border: 1px solid #777; border-radius: 3px; white-space: nowrap; }
.ln { font-family: "Liberation Sans", sans-serif; font-size: 11px; }
.w127 { width: 127px; } .w81 { width: 81px; } .w103 { width: 103px; } .w72 { width: 72px; }
.ml22 { margin-left: 22px; } .ml18 { margin-left: 18px; }
.primary { margin-left: auto; margin-right: 6px; border-color: #2a7fc0; background: linear-gradient(#f0f8fe, #d6ecfb 50%, #a8d4f0); box-shadow: inset 0 0 0 1px #bfe4fb; }
```
